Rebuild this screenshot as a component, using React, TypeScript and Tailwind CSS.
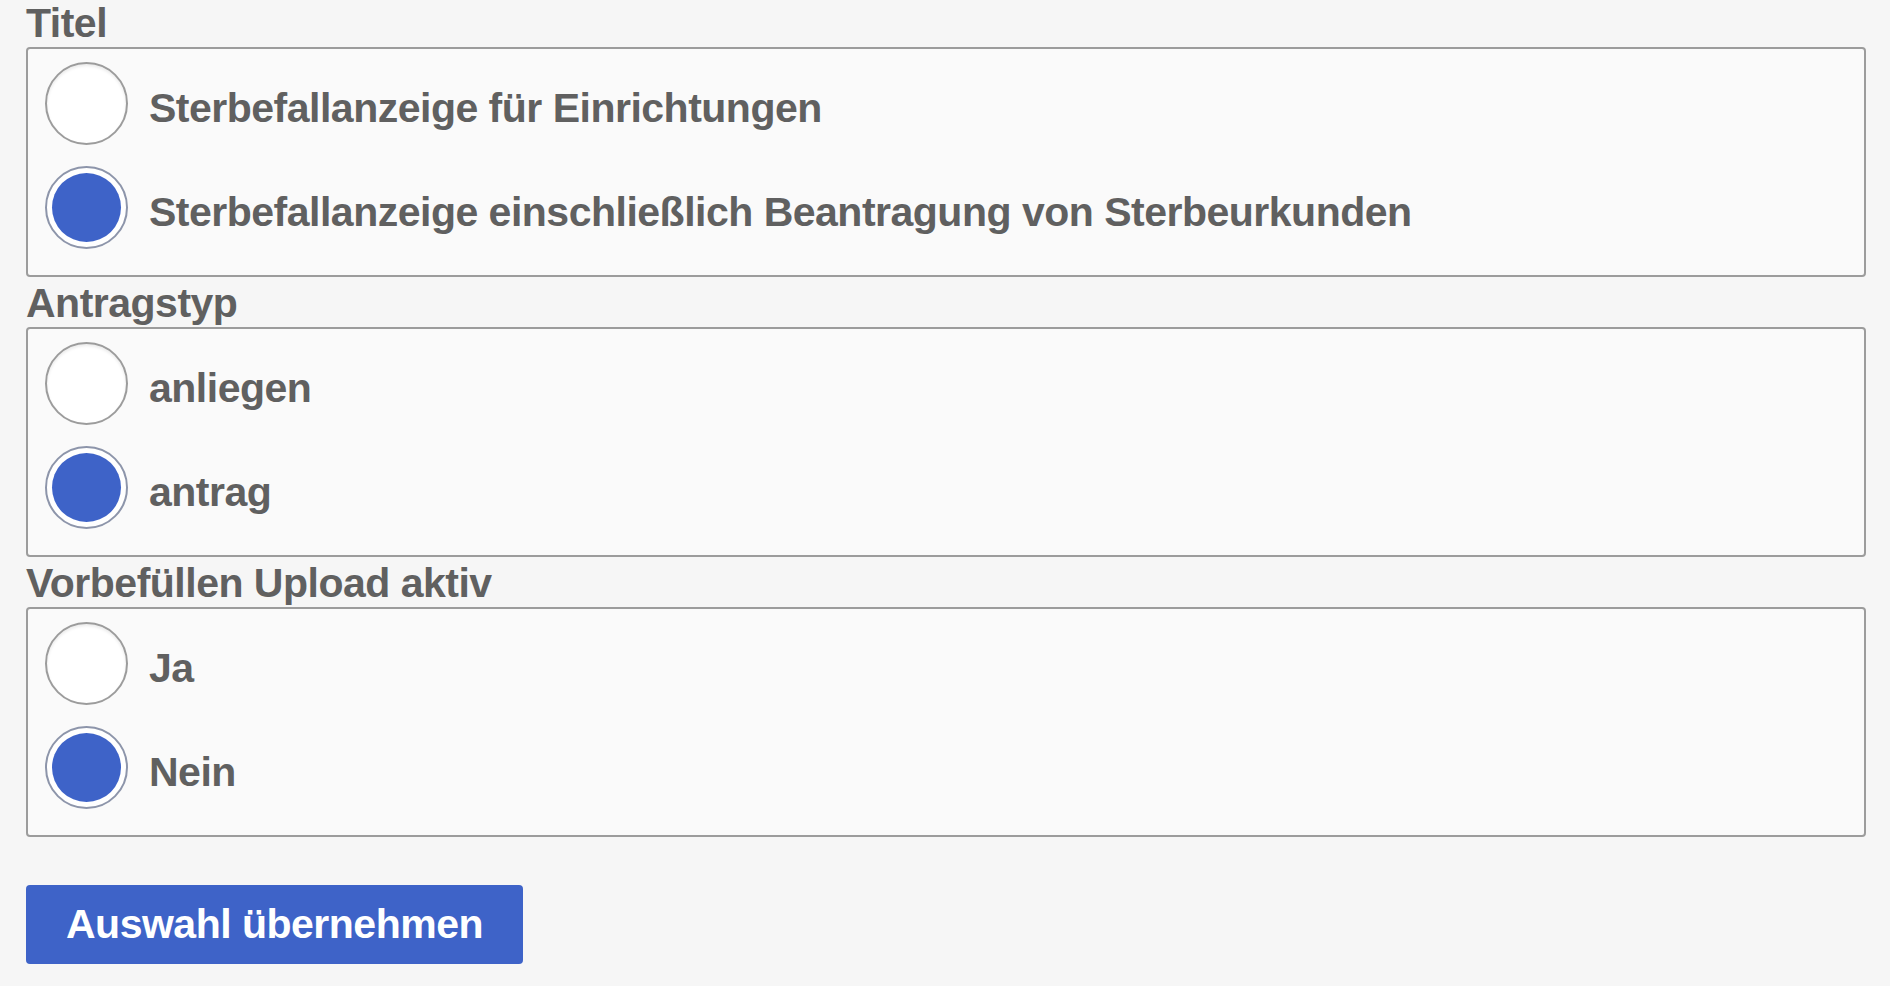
import { useState } from "react";

type Group = {
  name: string;
  label: string;
  options: string[];
};

const groups: Group[] = [
  {
    name: "titel",
    label: "Titel",
    options: [
      "Sterbefallanzeige für Einrichtungen",
      "Sterbefallanzeige einschließlich Beantragung von Sterbeurkunden",
    ],
  },
  {
    name: "antragstyp",
    label: "Antragstyp",
    options: ["anliegen", "antrag"],
  },
  {
    name: "upload",
    label: "Vorbefüllen Upload aktiv",
    options: ["Ja", "Nein"],
  },
];

function Radio({ checked }: { checked: boolean }) {
  if (checked) {
    return (
      <span className="flex h-[83px] w-[83px] shrink-0 items-center justify-center rounded-full border-2 border-[#8d95aa] bg-white">
        <span className="h-[69px] w-[69px] rounded-full bg-[#3e63c8]" />
      </span>
    );
  }
  return (
    <span className="h-[83px] w-[83px] shrink-0 rounded-full border-2 border-[#9c9c9c] bg-white shadow-[inset_0_2px_3px_rgba(0,0,0,0.08)]" />
  );
}

export default function App() {
  const [values, setValues] = useState<Record<string, number>>({
    titel: 1,
    antragstyp: 1,
    upload: 1,
  });

  return (
    <div className="min-h-screen bg-[#f6f6f6] pl-[26px] pr-[24px] font-['Liberation_Sans',Arial,sans-serif] font-bold tracking-[-0.5px] text-[#606060]">
      {groups.map((g, gi) => (
        <fieldset key={g.name} className={gi > 0 ? "mt-[3px]" : ""}>
          <legend className="text-[41px] leading-[47px]">{g.label}</legend>
          <div className="flex flex-col gap-[21px] rounded-[4px] border-2 border-[#9c9c9c] bg-[#fafafa] pt-[13px] pb-[26px] pl-[17px]">
            {g.options.map((opt, i) => (
              <label
                key={opt}
                className="flex cursor-pointer items-start gap-[21px]"
                onClick={() => setValues({ ...values, [g.name]: i })}
              >
                <Radio checked={values[g.name] === i} />
                <span className="mt-[23px] text-[41px] leading-[47px]">{opt}</span>
              </label>
            ))}
          </div>
        </fieldset>
      ))}

      <button className="mt-[48px] h-[79px] rounded-[4px] bg-[#3e63c8] px-[40px] text-[41px] leading-[47px] text-white">
        Auswahl übernehmen
      </button>
    </div>
  );
}
